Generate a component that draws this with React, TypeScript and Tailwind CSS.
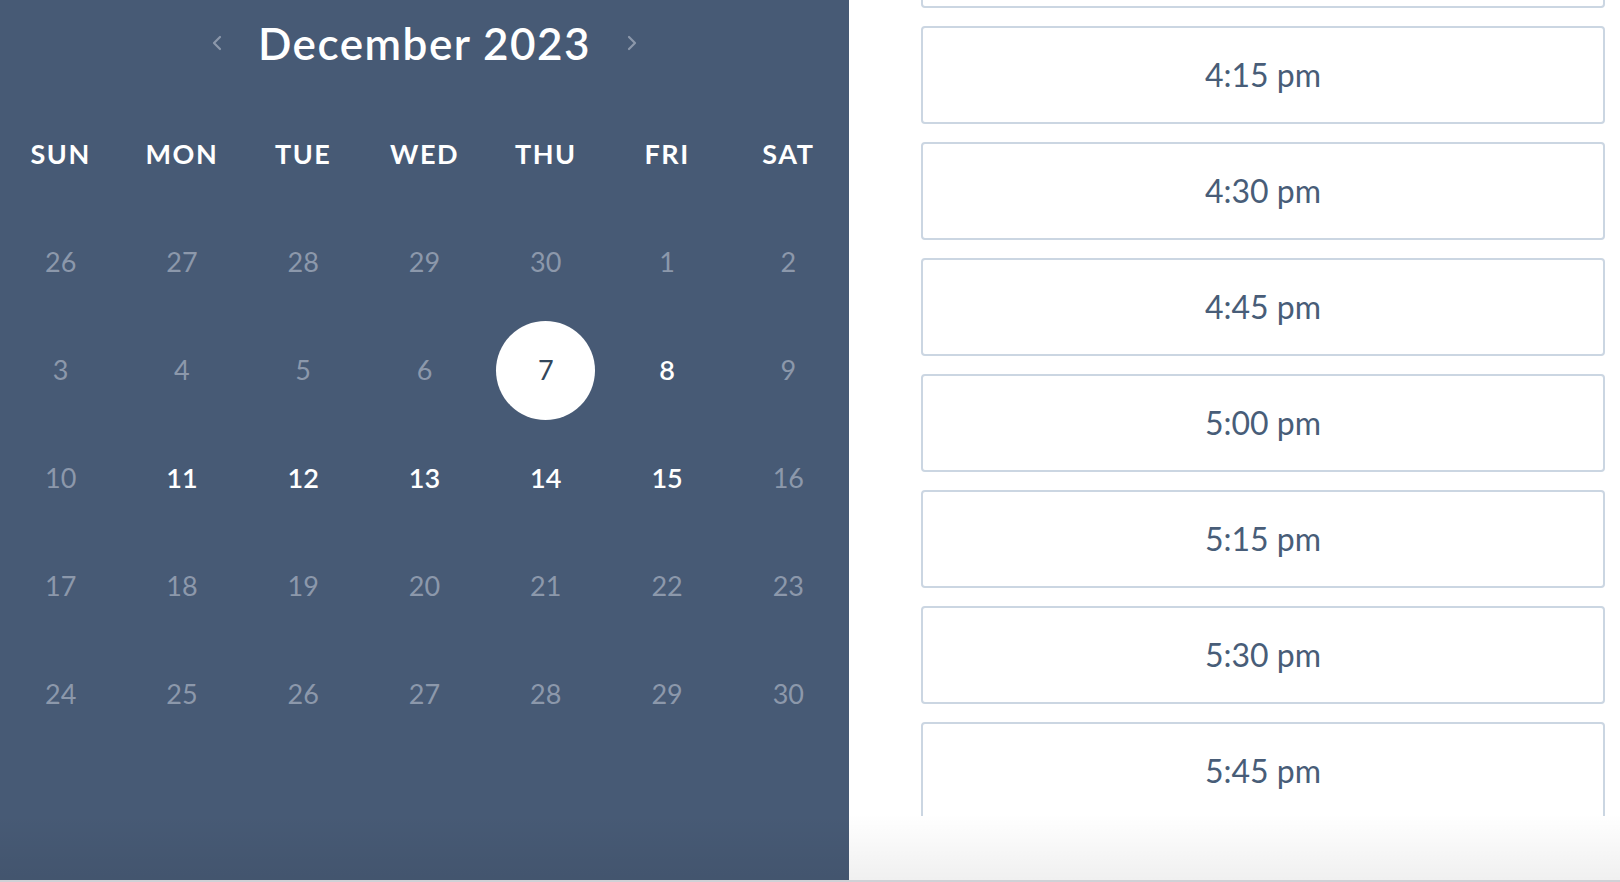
const weeks: number[][] = [
  [26, 27, 28, 29, 30, 1, 2],
  [3, 4, 5, 6, 7, 8, 9],
  [10, 11, 12, 13, 14, 15, 16],
  [17, 18, 19, 20, 21, 22, 23],
  [24, 25, 26, 27, 28, 29, 30],
];

const available = new Set([8, 11, 12, 13, 14, 15]);
const days = ["SUN", "MON", "TUE", "WED", "THU", "FRI", "SAT"];
const slots = ["4:00 pm", "4:15 pm", "4:30 pm", "4:45 pm", "5:00 pm", "5:15 pm", "5:30 pm", "5:45 pm", "6:00 pm"];

function Chevron({ dir }: { dir: "left" | "right" }) {
  return (
    <svg width="10" height="16" viewBox="0 0 10 16" fill="none" aria-hidden>
      <polyline
        points={dir === "left" ? "8,2 2,8 8,14" : "2,2 8,8 2,14"}
        stroke="#8c98ab"
        strokeWidth="2.2"
        strokeLinecap="round"
        strokeLinejoin="round"
      />
    </svg>
  );
}

function Calendar() {
  return (
    <div className="h-full w-[849px] shrink-0 bg-[#475a75] font-['Lato',sans-serif]">
      <div className="flex h-[86px] items-center justify-center gap-[25px]">
        <button className="flex h-8 w-8 items-center justify-center">
          <Chevron dir="left" />
        </button>
        <h2 className="text-[44px] font-semibold leading-none tracking-[1.5px] text-white">December 2023</h2>
        <button className="flex h-8 w-8 items-center justify-center">
          <Chevron dir="right" />
        </button>
      </div>
      <div className="grid grid-cols-7 pt-[14px]">
        {days.map((d) => (
          <div key={d} className="flex h-[108px] items-center justify-center text-[27px] font-bold tracking-[1.5px] text-white">
            {d}
          </div>
        ))}
        {weeks.map((week, w) =>
          week.map((n, i) => {
            const selected = w === 1 && n === 7;
            const open = w > 0 && w < 3 && available.has(n);
            return (
              <div key={`${w}-${i}`} className="flex h-[108px] items-center justify-center">
                {selected ? (
                  <span className="flex h-[99px] w-[99px] items-center justify-center rounded-full bg-white text-[27px] text-[#33475b]">
                    {n}
                  </span>
                ) : (
                  <span className={open ? "text-[27px] font-semibold text-white" : "text-[27px] text-[#8c98ab]"}>{n}</span>
                )}
              </div>
            );
          })
        )}
      </div>
    </div>
  );
}

function Slots() {
  return (
    <div className="h-full flex-1 bg-white">
      <div className="h-[816px] overflow-hidden pl-[72px] pr-[15px]">
        <div className="-mt-[90px] flex flex-col gap-[18px]">
          {slots.map((s) => (
            <button
              key={s}
              className="flex h-[98px] w-full shrink-0 items-center justify-center rounded-[4px] border-2 border-[#cbd6e2] bg-white font-['Lato',sans-serif] text-[32px] text-[#485d78]"
            >
              {s}
            </button>
          ))}
        </div>
      </div>
    </div>
  );
}

export default function App() {
  return (
    <div className="flex h-[882px] w-[1620px] flex-col overflow-hidden bg-white">
      <div className="relative flex h-[880px]">
        <Calendar />
        <Slots />
        <div className="pointer-events-none absolute inset-x-0 bottom-0 h-[66px] bg-gradient-to-b from-transparent to-black/[0.06]" />
      </div>
      <div className="h-[2px] bg-[#d0d1d6]" />
    </div>
  );
}
